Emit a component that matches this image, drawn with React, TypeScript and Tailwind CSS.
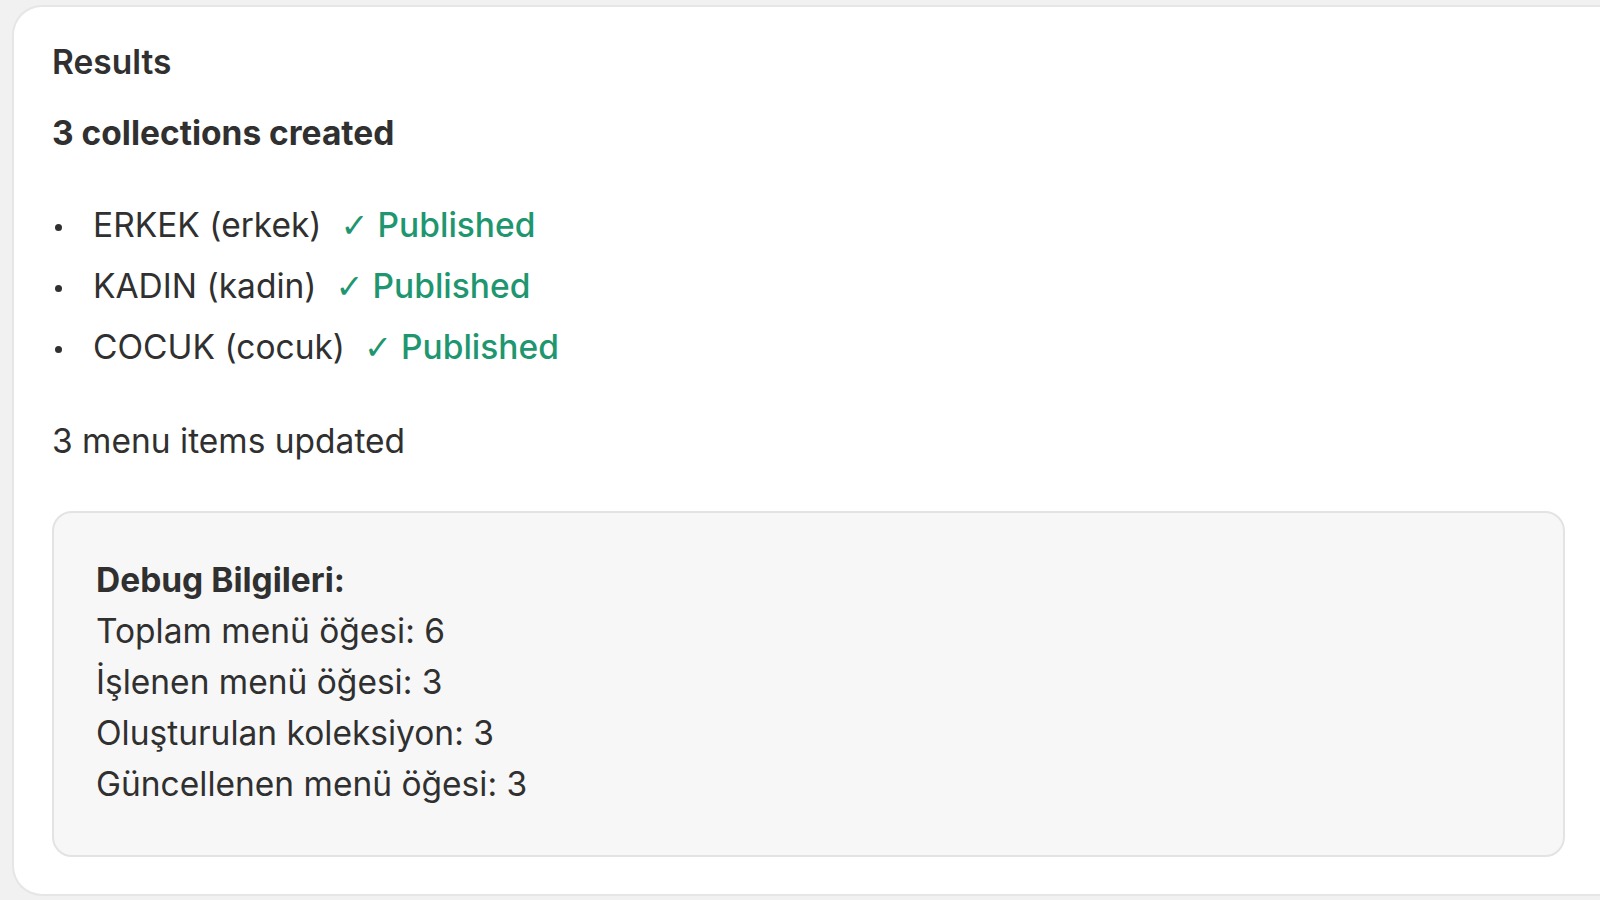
const items = [
  { name: "ERKEK", handle: "erkek" },
  { name: "KADIN", handle: "kadin" },
  { name: "COCUK", handle: "cocuk" },
];

const debugLines = [
  "Toplam menü öğesi: 6",
  "İşlenen menü öğesi: 3",
  "Oluşturulan koleksiyon: 3",
  "Güncellenen menü öğesi: 3",
];

export default function App() {
  return (
    <div className="min-h-screen w-full bg-[#f1f1f1] pl-[12px] pt-[5px] pb-[4px] font-['Inter','Liberation_Sans',sans-serif] text-[33.5px] leading-[51px] text-[#303030]">
      <div className="h-[891px] rounded-l-[30px] border-y-2 border-l-2 border-[#e6e6e6] bg-white pl-[38px] pr-[35px] pt-[30px]">
        <h2 className="font-semibold">Results</h2>
        <h3 className="mt-[20px] font-bold">3 collections created</h3>
        <ul className="mt-[41px] flex flex-col gap-[10px]">
          {items.map((it) => (
            <li key={it.handle} className="flex items-center">
              <span className="ml-[3px] mr-[31px] mt-[4px] h-[7px] w-[7px] rounded-full bg-[#303030]" />
              <span>
                {it.name} ({it.handle})
              </span>
              <span className="ml-[19px] font-medium text-[#1e9670]">
                <span className="font-['DejaVu_Sans',sans-serif] font-normal">✓</span> Published
              </span>
            </li>
          ))}
        </ul>
        <p className="mt-[43px]">3 menu items updated</p>
        <div className="mt-[44px] h-[346px] rounded-[20px] border-2 border-[#e3e3e3] bg-[#f7f7f7] px-[42px] pt-[42px]">
          <div className="font-bold">Debug Bilgileri:</div>
          {debugLines.map((l) => (
            <div key={l}>{l}</div>
          ))}
        </div>
      </div>
    </div>
  );
}
